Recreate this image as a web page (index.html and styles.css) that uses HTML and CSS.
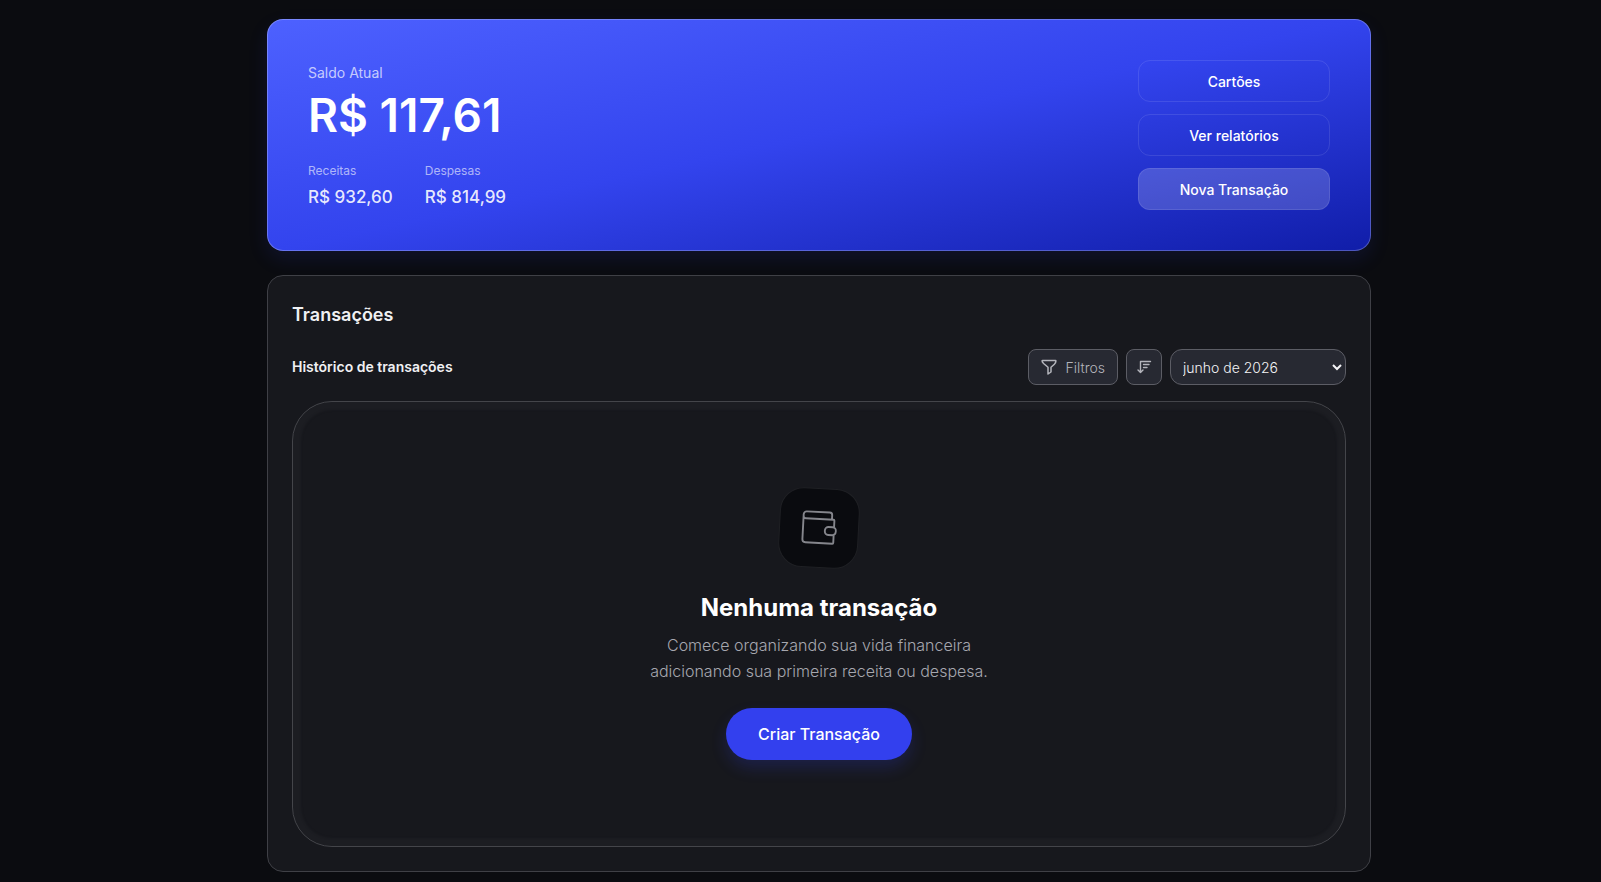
FILE: index.html
```html
<!DOCTYPE html>
<html lang="pt-BR">
  <head>
    <meta charset="UTF-8" />
    <meta name="viewport" content="width=device-width, initial-scale=1.0" />
    <title>Transações</title>
    <link rel="stylesheet" href="styles.css">
  </head>
  <body>
    <main class="container">
      <section class="balance">
        <div class="balance-info">
          <p class="balance-label">Saldo Atual</p>
          <p class="balance-total">R$ 117,61</p>
          <dl class="totals">
            <div class="total">
              <dt>Receitas</dt>
              <dd>R$ 932,60</dd>
            </div>
            <div class="total">
              <dt>Despesas</dt>
              <dd>R$ 814,99</dd>
            </div>
          </dl>
        </div>
        <div class="balance-actions">
          <button type="button" class="action">Cartões</button>
          <button type="button" class="action">Ver relatórios</button>
          <button type="button" class="action action-main">Nova Transação</button>
        </div>
      </section>

      <section class="card">
        <h1>Transações</h1>
        <div class="toolbar">
          <h2>Histórico de transações</h2>
          <div class="controls">
            <button type="button" class="control">
              <svg width="16" height="16" viewBox="0 0 16 16" fill="none" stroke="currentColor" stroke-width="1.5" stroke-linejoin="round" aria-hidden="true">
                <path d="M1.500 1.500h13c.3 0 .4.3.4.6 0 1.500-.4 2.100-1.500 3.100L10 8.300v4.700l-3 2V8.300L2.600 4.500C1.500 3.500 1.100 3 1.100 2.100c0-.3.100-.6.400-.6Z" />
              </svg>
              Filtros
            </button>
            <button type="button" class="control control-icon" aria-label="Ordenar">
              <svg width="16" height="16" viewBox="0 0 16 16" fill="none" stroke="currentColor" stroke-width="1.4" stroke-linecap="round" stroke-linejoin="round" aria-hidden="true">
                <path d="M4.500 2.500v11M2 11l2.500 2.500L7 11M4.500 2.500h10M7.500 5.500h5.500M7.500 8.500h3.500" />
              </svg>
            </button>
            <select class="month" aria-label="Mês">
              <option>junho de 2026</option>
            </select>
          </div>
        </div>

        <div class="empty">
          <div class="empty-icon">
            <svg width="36" height="36" viewBox="0 0 36 36" fill="none" stroke="currentColor" stroke-width="1.9" stroke-linejoin="round" aria-hidden="true">
              <path d="M30.500 9V4.500A2.500 2.500 0 0 0 28 2H5a3 3 0 0 0-3 3v25a3 3 0 0 0 3 3h27a1 1 0 0 0 1-1v-7.500M2 6.500A2.500 2.500 0 0 0 4.500 9H32a1 1 0 0 1 1 1v6.500" />
              <rect x="24" y="16.500" width="11" height="8" rx="3.500" />
            </svg>
          </div>
          <h3>Nenhuma transação</h3>
          <p>Comece organizando sua vida financeira adicionando sua primeira receita ou despesa.</p>
          <button type="button" class="create">Criar Transação</button>
        </div>
      </section>
    </main>
  </body>
</html>
```
FILE: styles.css
```css
* {
  box-sizing: border-box;
}

body {
  margin: 0;
  padding: 19px 0 11px 37px;
  background: #0b0c10;
  color: #f0f0f3;
  font-family: Inter, sans-serif;
}

h1,
h2,
h3,
p,
dl,
dd {
  margin: 0;
}

button,
select {
  font-family: inherit;
  cursor: pointer;
}

.container {
  max-width: 1104px;
  margin: 0 auto;
  display: flex;
  flex-direction: column;
  gap: 24px;
}

.balance {
  display: flex;
  align-items: center;
  justify-content: space-between;
  padding: 40px;
  border: 1px solid rgba(255, 255, 255, 0.25);
  border-radius: 16px;
  background: linear-gradient(168deg, #4d61ff 0%, #3344ee 50%, #101da8 100%) border-box;
  box-shadow: 0 8px 20px rgba(51, 68, 238, 0.12);
}

.balance-info {
  padding-top: 2px;
}

.balance-label {
  font-size: 14px;
  line-height: 20px;
  color: rgba(255, 255, 255, 0.7);
}

.balance-total {
  margin-top: 4px;
  font-size: 46px;
  line-height: 56px;
  font-weight: 600;
  color: #fff;
}

.totals {
  display: flex;
  gap: 32px;
  margin-top: 20px;
}

.total dt {
  font-size: 12px;
  line-height: 16px;
  color: rgba(255, 255, 255, 0.6);
}

.total dd {
  margin-top: 6px;
  font-size: 17px;
  line-height: 24px;
  font-weight: 500;
  color: rgba(255, 255, 255, 0.9);
}

.balance-actions {
  display: flex;
  flex-direction: column;
  gap: 12px;
  width: 192px;
}

.action {
  height: 42px;
  border: 1px solid rgba(255, 255, 255, 0.1);
  border-radius: 12px;
  background: transparent;
  color: #fff;
  font-size: 14px;
  font-weight: 500;
}

.action-main {
  background: rgba(255, 255, 255, 0.18);
}

.card {
  padding: 24px;
  border: 1px solid #3f4046;
  border-radius: 16px;
  background: #17181d;
}

.card h1 {
  font-size: 18px;
  line-height: 30px;
  font-weight: 600;
}

.toolbar {
  display: flex;
  align-items: center;
  justify-content: space-between;
  margin: 19px 0 16px;
}

.toolbar h2 {
  font-size: 14px;
  line-height: 20px;
  font-weight: 600;
}

.controls {
  display: flex;
  gap: 8px;
}

.control,
.month {
  height: 36px;
  border: 1px solid #5c5d65;
  border-radius: 8px;
  background-color: #272932;
  font-size: 14px;
}

.control {
  display: flex;
  align-items: center;
  justify-content: center;
  gap: 8px;
  padding: 0 12px;
  color: #b4b5bc;
  font-weight: 300;
}

.control-icon {
  width: 36px;
  padding: 0;
}

.month {
  width: 176px;
  padding: 0 0 0 8px;
  border-radius: 12px;
  color: #f4f4f6;
  font-weight: 300;
}

.empty {
  display: flex;
  flex-direction: column;
  align-items: center;
  padding: 86px 24px;
  border: 1px solid #44454a;
  border-radius: 40px;
  box-shadow: inset 0 0 2px 8px #1c1d22;
  text-align: center;
}

.empty-icon {
  display: flex;
  align-items: center;
  justify-content: center;
  width: 80px;
  height: 80px;
  border: 1px solid #1f2024;
  border-radius: 24px;
  background: #0a0b0f;
  color: #85868c;
  transform: rotate(3deg);
}

.empty h3 {
  margin-top: 24px;
  font-size: 24px;
  line-height: 32px;
  font-weight: 700;
  color: #fff;
}

.empty p {
  max-width: 352px;
  margin-top: 8px;
  font-size: 16px;
  line-height: 26px;
  font-weight: 300;
  color: #a6a7af;
}

.create {
  height: 52px;
  margin-top: 24px;
  padding: 0 32px;
  border: 0;
  border-radius: 26px;
  background: #3340ee;
  box-shadow: 0 8px 16px rgba(51, 64, 238, 0.2);
  color: #fff;
  font-size: 16px;
  font-weight: 500;
}
```
